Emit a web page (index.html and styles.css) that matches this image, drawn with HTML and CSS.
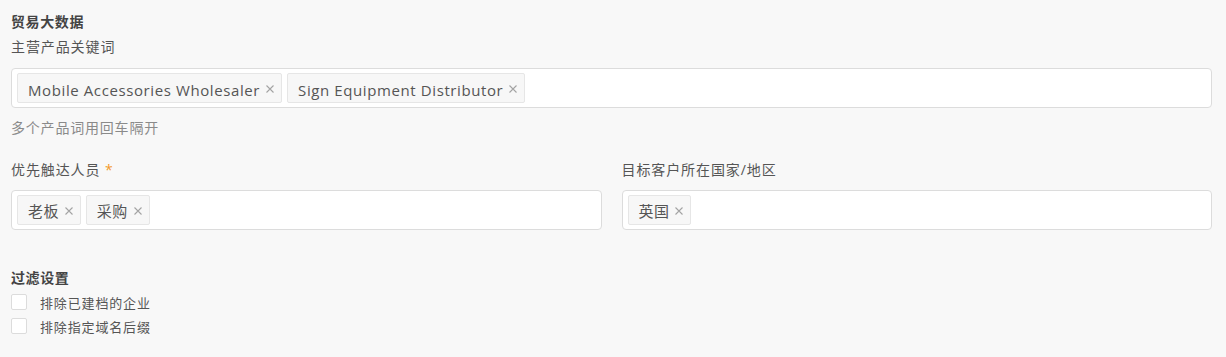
FILE: index.html
```html
<!DOCTYPE html>
<html lang="zh-CN">
<head>
<meta charset="utf-8">
<link rel="stylesheet" href="styles.css">
</head>
<body>
<div class="page">
  <div class="section-title">贸易大数据</div>
  <div class="label first-label">主营产品关键词</div>
  <div class="tag-box">
    <span class="tag latin">Mobile Accessories Wholesaler<svg class="x" viewBox="0 0 8 8"><path d="M0.5 0.5L7.5 7.5M7.5 0.5L0.5 7.5"/></svg></span>
    <span class="tag latin">Sign Equipment Distributor<svg class="x" viewBox="0 0 8 8"><path d="M0.5 0.5L7.5 7.5M7.5 0.5L0.5 7.5"/></svg></span>
  </div>
  <div class="hint">多个产品词用回车隔开</div>
  <div class="row">
    <div class="field">
      <div class="label">优先触达人员 <span class="req">*</span></div>
      <div class="tag-box">
        <span class="tag">老板<svg class="x" viewBox="0 0 8 8"><path d="M0.5 0.5L7.5 7.5M7.5 0.5L0.5 7.5"/></svg></span>
        <span class="tag">采购<svg class="x" viewBox="0 0 8 8"><path d="M0.5 0.5L7.5 7.5M7.5 0.5L0.5 7.5"/></svg></span>
      </div>
    </div>
    <div class="field">
      <div class="label">目标客户所在国家/地区</div>
      <div class="tag-box">
        <span class="tag">英国<svg class="x" viewBox="0 0 8 8"><path d="M0.5 0.5L7.5 7.5M7.5 0.5L0.5 7.5"/></svg></span>
      </div>
    </div>
  </div>
  <div class="section-title filter-title">过滤设置</div>
  <div class="checks">
    <label class="check"><span class="box"></span>排除已建档的企业</label>
    <label class="check"><span class="box"></span>排除指定域名后缀</label>
  </div>
</div>
</body>
</html>
```

FILE: styles.css
```css
html, body {
  margin: 0;
  padding: 0;
  background: #f8f8f8;
}
body {
  font-family: "Open Sans", "Noto Sans CJK SC", sans-serif;
  color: #555;
}
.page {
  padding: 12px 14px 0 11px;
}
.section-title {
  font-size: 14px;
  line-height: 20px;
  font-weight: bold;
  color: #444;
  letter-spacing: 0.6px;
}
.label {
  font-size: 14px;
  line-height: 20px;
  color: #555;
  letter-spacing: 0.9px;
}
.first-label {
  margin-top: 5px;
}
.req {
  color: #f39a2b;
}
.tag-box {
  display: flex;
  gap: 5px;
  align-items: center;
  height: 30px;
  padding: 4px 5px;
  background: #fff;
  border: 1px solid #dcdcdc;
  border-radius: 4px;
  margin-top: 11px;
}
.field .tag-box {
  margin-top: 10px;
}
.tag {
  box-sizing: border-box;
  display: inline-flex;
  align-items: center;
  gap: 6px;
  height: 30px;
  padding: 1px 7px 0 10px;
  background: #f7f7f7;
  border: 1px solid #e6e6e6;
  border-radius: 2px;
  font-size: 15px;
  color: #555;
  letter-spacing: 0.4px;
}
.tag.latin {
  padding-top: 3px;
  letter-spacing: 0.6px;
}
.tag.latin .x {
  margin-top: -2px;
}
.x {
  width: 8px;
  height: 8px;
  stroke: #a3a3a3;
  stroke-width: 1.1;
  fill: none;
}
.hint {
  margin-top: 10px;
  font-size: 14px;
  line-height: 20px;
  color: #8a8a8a;
  letter-spacing: 0.8px;
}
.row {
  display: grid;
  grid-template-columns: 1fr 1fr;
  gap: 20px;
  margin-top: 22px;
}
.filter-title {
  margin-top: 38px;
}
.checks {
  margin-top: 2px;
}
.check {
  display: flex;
  align-items: center;
  gap: 13px;
  height: 24px;
  font-size: 13px;
  color: #555;
  letter-spacing: 0.85px;
}
.box {
  width: 14px;
  height: 14px;
  background: #fff;
  border: 1px solid #dcdcdc;
  border-radius: 2px;
}
```
